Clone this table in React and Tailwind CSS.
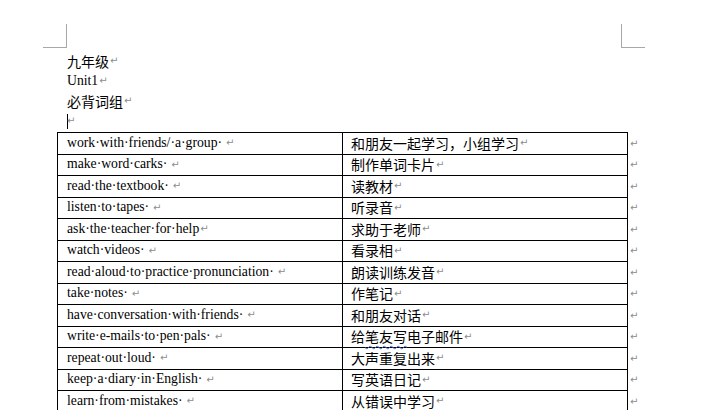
import React from "react"

const serif = { fontFamily: '"Liberation Serif", "Noto Sans CJK SC", serif' }
const cjk = { fontFamily: '"Noto Sans CJK SC", "Liberation Sans", sans-serif' }

const rows = [
  ["work·with·friends/·a·group·", "和朋友一起学习，小组学习"],
  ["make·word·carks·", "制作单词卡片"],
  ["read·the·textbook·", "读教材"],
  ["listen·to·tapes·", "听录音"],
  ["ask·the·teacher·for·help", "求助于老师", true],
  ["watch·videos·", "看录相"],
  ["read·aloud·to·practice·pronunciation·", "朗读训练发音"],
  ["take·notes·", "作笔记"],
  ["have·conversation·with·friends·", "和朋友对话"],
  ["write·e-mails·to·pen·pals·", "给笔友写电子邮件"],
  ["repeat·out·loud·", "大声重复出来"],
  ["keep·a·diary·in·English·", "写英语日记"],
  ["learn·from·mistakes·", "从错误中学习"],
]

function Mark({ className = "" }) {
  return (
    <span
      className={"text-[10px] leading-none text-[#8c8c8c] " + className}
      style={{ fontFamily: '"DejaVu Sans", sans-serif' }}
    >
      ↵
    </span>
  )
}

function Chinese({ text }) {
  if (text === "给笔友写电子邮件") {
    return (
      <span>
        给
        <span className="underline decoration-wavy decoration-[#4a6ad8] decoration-1 underline-offset-[3px]">
          笔友写
        </span>
        电子邮件
      </span>
    )
  }
  return <span>{text}</span>
}

export default function App() {
  return (
    <div className="w-[701px] h-[410px] overflow-hidden bg-white text-black">
      <div className="flex pt-[24px]">
        <div className="ml-[43px] w-[24px] h-[24px] border-r border-b border-[#a8a8a8]" />
        <div className="ml-auto mr-[56px] w-[24px] h-[24px] border-l border-b border-[#a8a8a8]" />
      </div>

      <div className="mt-[3px] pl-[67px] text-[14px]">
        <div className="h-[20px] leading-[20px] flex items-center" style={cjk}>
          九年级<Mark className="ml-[1px]" />
        </div>
        <div className="h-[20px] leading-[20px] flex items-center text-[13.7px]" style={serif}>
          Unit1<Mark className="ml-[1px]" />
        </div>
        <div className="h-[20px] leading-[20px] flex items-center" style={cjk}>
          必背词组<Mark className="ml-[1px]" />
        </div>
        <div className="h-[20px] flex items-center">
          <span className="inline-block h-[15px] border-l border-black" />
          <Mark className="-ml-[1px]" />
        </div>
      </div>

      <div className="mt-[1px] ml-[57px]">
        <div className="w-[571px] border-t border-l border-black">
          {rows.map(([en, zh, tight], i) => (
            <div key={i} className="flex h-[21.5px]">
              <div
                className="w-[285px] shrink-0 border-r border-b border-black pl-[9px] flex items-center text-[13.7px]"
                style={serif}
              >
                <span>{en}</span>
                <Mark className={tight ? "ml-[1px]" : "ml-[4px]"} />
              </div>
              <div
                className="w-[285px] shrink-0 border-r border-b border-black pl-[8px] flex items-center text-[14px]"
                style={cjk}
              >
                <Chinese text={zh} />
                <Mark className="ml-[1px]" />
              </div>
              <div className="flex items-center pl-[2px]">
                <Mark />
              </div>
            </div>
          ))}
        </div>
      </div>
    </div>
  )
}
